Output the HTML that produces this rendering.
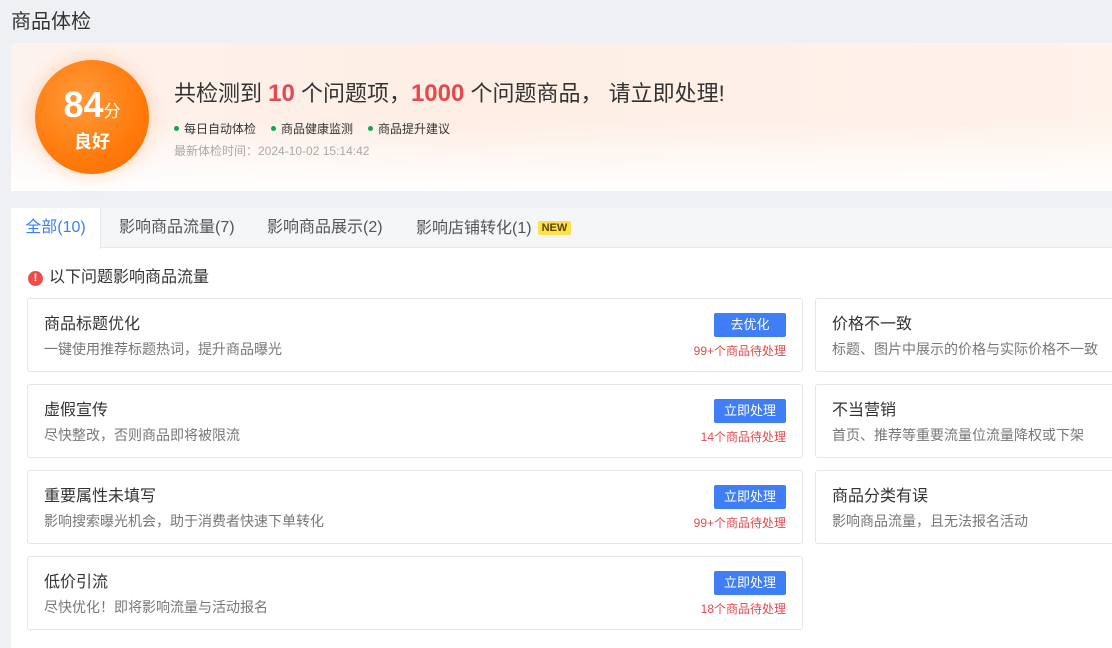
<!DOCTYPE html>
<html><head><meta charset="utf-8"><style>
*{margin:0;padding:0;box-sizing:border-box}
body{width:1112px;height:636px;overflow:hidden;background:#eef0f4;font-family:"Liberation Sans","Noto Sans CJK SC",sans-serif;color:#333;position:relative}
.abs{position:absolute}
.title{left:11px;top:5px;font-size:20px;color:#333}
.hdr{left:11px;top:43px;width:1110px;height:148px;border-radius:4px;background:linear-gradient(90deg,#fdf3ee 0%,#feeee4 40%,#fff3ec 100%)}
.hdr2{left:11px;top:120px;width:1110px;height:71px;background:linear-gradient(180deg,rgba(255,255,255,0),#fff)}
.circle{left:35px;top:60px;width:114px;height:114px;border-radius:50%;background:radial-gradient(circle at 40% 35%,#ff9a3c,#ff7a0a 60%,#f46f00);box-shadow:0 0 18px rgba(255,140,60,.35);color:#fff;text-align:center}
.main{left:174px;top:76px;font-size:22px;color:#333}
.main b{font-size:24px;font-weight:bold;color:#e5484d}
.feat{left:174px;top:120px;font-size:12px;color:#333}
.feat span{margin-right:15px}
.feat i{display:inline-block;width:5px;height:5px;border-radius:50%;background:#13a454;margin-right:5px;vertical-align:2px}
.time{left:174px;top:142px;font-size:12px;color:#aaa}
.panel{left:11px;top:208px;width:1110px;height:440px;background:#fff}
.tabs{left:11px;top:208px;width:1110px;height:40px;background:#f5f6f8;border-bottom:1px solid #e6e8ec}
.tab{top:208px;height:40px;line-height:40px;font-size:16px;color:#555}
.tab.act{left:11px;width:90px;background:#fff;color:#3e7ef6;text-align:center;height:41px;border-right:1px solid #e6e8ec}
.new{background:#ffe04b;color:#5a4300;font-size:11px;font-weight:bold;padding:1px 4px;border-radius:2px;margin-left:6px;vertical-align:2px}
.warn{left:28px;top:263px;font-size:16px;color:#333}
.warn i{display:inline-block;width:15px;height:15px;border-radius:50%;background:#ef4c4c;color:#fff;font-size:11px;font-weight:bold;text-align:center;line-height:15px;font-style:normal;margin-right:6px;vertical-align:1px}
.card{border:1px solid #e4e6ea;border-radius:3px;background:#fff;height:74px}
.card h3{position:absolute;left:16px;top:11px;font-size:16px;font-weight:normal;color:#333}
.card p{position:absolute;left:16px;top:40px;font-size:14px;color:#777}
.btn{position:absolute;right:16px;top:14px;width:72px;height:24px;background:#3f7ef7;border-radius:2px;color:#fff;font-size:13px;text-align:center;line-height:24px}
.cnt{position:absolute;right:16px;top:43px;font-size:12px;color:#e5484d}
</style></head><body>
<div class="abs title">商品体检</div>
<div class="abs hdr"></div><div class="abs hdr2"></div>
<div class="abs circle"><div style="margin-top:26px;font-size:36px;font-weight:bold;line-height:38px">84<span style="font-size:17px;font-weight:normal">分</span></div><div style="font-size:18px;font-weight:bold;line-height:22px">良好</div></div>
<div class="abs main">共检测到 <b>10</b> 个问题项，<b>1000</b> 个问题商品， 请立即处理!</div>
<div class="abs feat"><span><i></i>每日自动体检</span><span><i></i>商品健康监测</span><span><i></i>商品提升建议</span></div>
<div class="abs time">最新体检时间：2024-10-02 15:14:42</div>
<div class="abs panel"></div>
<div class="abs tabs"></div>
<div class="abs tab act">全部(10)</div>
<div class="abs tab" style="left:119px">影响商品流量(7)</div>
<div class="abs tab" style="left:267px">影响商品展示(2)</div>
<div class="abs tab" style="left:416px">影响店铺转化(1)<span class="new">NEW</span></div>
<div class="abs warn"><i>!</i>以下问题影响商品流量</div>

<div class="abs card" style="left:27px;top:298px;width:776px"><h3>商品标题优化</h3><p>一键使用推荐标题热词，提升商品曝光</p><div class="btn">去优化</div><div class="cnt">99+个商品待处理</div></div>
<div class="abs card" style="left:27px;top:384px;width:776px"><h3>虚假宣传</h3><p>尽快整改，否则商品即将被限流</p><div class="btn">立即处理</div><div class="cnt">14个商品待处理</div></div>
<div class="abs card" style="left:27px;top:470px;width:776px"><h3>重要属性未填写</h3><p>影响搜索曝光机会，助于消费者快速下单转化</p><div class="btn">立即处理</div><div class="cnt">99+个商品待处理</div></div>
<div class="abs card" style="left:27px;top:556px;width:776px"><h3>低价引流</h3><p>尽快优化！即将影响流量与活动报名</p><div class="btn">立即处理</div><div class="cnt">18个商品待处理</div></div>

<div class="abs card" style="left:815px;top:298px;width:320px"><h3>价格不一致</h3><p>标题、图片中展示的价格与实际价格不一致</p></div>
<div class="abs card" style="left:815px;top:384px;width:320px"><h3>不当营销</h3><p>首页、推荐等重要流量位流量降权或下架</p></div>
<div class="abs card" style="left:815px;top:470px;width:320px"><h3>商品分类有误</h3><p>影响商品流量，且无法报名活动</p></div>
</body></html>
